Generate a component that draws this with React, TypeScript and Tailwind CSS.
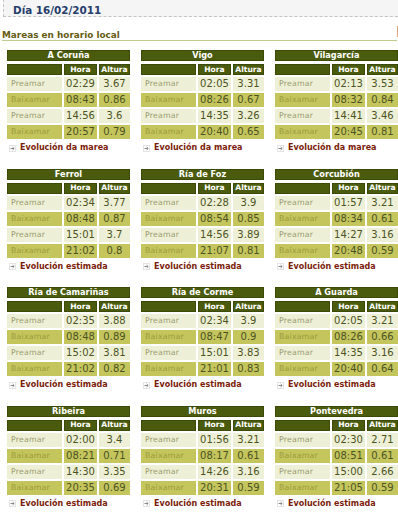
import React from "react";

type Row = [string, string];
type Station = { name: string; rows: Row[]; link: string };

const stations: Station[] = [
  { name: "A Coruña", rows: [["02:29", "3.67"], ["08:43", "0.86"], ["14:56", "3.6"], ["20:57", "0.79"]], link: "Evolución da marea" },
  { name: "Vigo", rows: [["02:05", "3.31"], ["08:26", "0.67"], ["14:35", "3.26"], ["20:40", "0.65"]], link: "Evolución da marea" },
  { name: "Vilagarcía", rows: [["02:13", "3.53"], ["08:32", "0.84"], ["14:41", "3.46"], ["20:45", "0.81"]], link: "Evolución da marea" },
  { name: "Ferrol", rows: [["02:34", "3.77"], ["08:48", "0.87"], ["15:01", "3.7"], ["21:02", "0.8"]], link: "Evolución estimada" },
  { name: "Ría de Foz", rows: [["02:28", "3.9"], ["08:54", "0.85"], ["14:56", "3.89"], ["21:07", "0.81"]], link: "Evolución estimada" },
  { name: "Corcubión", rows: [["01:57", "3.21"], ["08:34", "0.61"], ["14:27", "3.16"], ["20:48", "0.59"]], link: "Evolución estimada" },
  { name: "Ría de Camariñas", rows: [["02:35", "3.88"], ["08:48", "0.89"], ["15:02", "3.81"], ["21:02", "0.82"]], link: "Evolución estimada" },
  { name: "Ría de Corme", rows: [["02:34", "3.9"], ["08:47", "0.9"], ["15:01", "3.83"], ["21:01", "0.83"]], link: "Evolución estimada" },
  { name: "A Guarda", rows: [["02:05", "3.21"], ["08:26", "0.66"], ["14:35", "3.16"], ["20:40", "0.64"]], link: "Evolución estimada" },
  { name: "Ribeira", rows: [["02:00", "3.4"], ["08:21", "0.71"], ["14:30", "3.35"], ["20:35", "0.69"]], link: "Evolución estimada" },
  { name: "Muros", rows: [["01:56", "3.21"], ["08:17", "0.61"], ["14:26", "3.16"], ["20:31", "0.59"]], link: "Evolución estimada" },
  { name: "Pontevedra", rows: [["02:30", "2.71"], ["08:51", "0.61"], ["15:00", "2.66"], ["21:05", "0.59"]], link: "Evolución estimada" },
];

function Arrow() {
  return (
    <svg width="7" height="7" viewBox="0 0 7 7" className="shrink-0">
      <rect x="0.5" y="0.5" width="6" height="6" fill="#ffffff" stroke="#e4e4e4" />
      <path d="M1.5 3.5 H5" stroke="#8a8a8a" strokeWidth="1" />
      <path d="M3.6 2 L5.2 3.5 L3.6 5" stroke="#8a8a8a" strokeWidth="1" fill="none" />
    </svg>
  );
}

function TideTable({ s }: { s: Station }) {
  return (
    <div className="flex flex-col">
      <div className="h-[11px] bg-[#4b5b0e] border border-[#3c4a08] flex items-center justify-center text-white font-bold text-[8.2px] leading-none">
        {s.name}
      </div>
      <div className="mt-[3px] h-[11px] flex gap-[2px] text-white text-[7.6px] font-semibold leading-none">
        <div className="w-[55px] bg-[#4b5b0e] border border-[#3c4a08]" />
        <div className="w-[33px] bg-[#4b5b0e] border border-[#3c4a08] flex items-center justify-center">Hora</div>
        <div className="w-[31px] bg-[#4b5b0e] border border-[#3c4a08] flex items-center justify-center">Altura</div>
      </div>
      {s.rows.map((r, i) => {
        const pre = i % 2 === 0;
        const bg = pre ? "bg-[#edf0d6]" : "bg-[#c4c55d]";
        return (
          <div key={i} className="mt-[2px] h-[14px] flex gap-[2px] leading-none">
            <div className={`w-[55px] ${bg} flex items-center pl-[4px] text-[7.8px] tracking-[0.2px] ${pre ? "text-[#9a9a6e]" : "text-[#9b9b3a]"}`}>
              {pre ? "Preamar" : "Baixamar"}
            </div>
            <div className={`w-[33px] ${bg} flex items-center justify-center text-[10px] text-[#4c5322]`}>{r[0]}</div>
            <div className={`w-[31px] ${bg} flex items-center justify-center text-[10px] text-[#4c5322]`}>{r[1]}</div>
          </div>
        );
      })}
      <div className="mt-[1px] h-[16px] flex items-center gap-[4px] pl-[2px]">
        <Arrow />
        <span className="text-[8px] font-bold text-[#7b1d0b] leading-none">{s.link}</span>
      </div>
    </div>
  );
}

export default function App() {
  return (
    <div
      className="relative w-[398px] h-[512px] overflow-hidden bg-white"
      style={{ fontFamily: '"DejaVu Sans", Verdana, sans-serif' }}
    >
      <div className="ml-[3px] -mt-[1px] h-[18px] w-[420px] border border-dashed border-[#c4c4c4] bg-[#f5f5f5] pt-[4px] pl-[9px] flex items-center">
        <span className="text-[10.4px] font-bold text-[#263d6c] leading-none">Día 16/02/2011</span>
      </div>
      <div className="ml-[2px] mt-[9px] w-[395px] border-b border-[#c2c98a] leading-[13px] h-[15px]">
        <span className="text-[8.9px] font-bold text-[#655c12]">Mareas en horario local</span>
      </div>
      <div className="ml-[7px] mt-[9px] grid grid-cols-[123px_123px_123px] gap-x-[11px] gap-y-[12.5px]">
        {stations.map((s) => (
          <TideTable key={s.name} s={s} />
        ))}
      </div>
      <div className="absolute left-[397px] top-[26px] w-[1px] h-[11px] bg-[#e9a57a]" />
    </div>
  );
}
